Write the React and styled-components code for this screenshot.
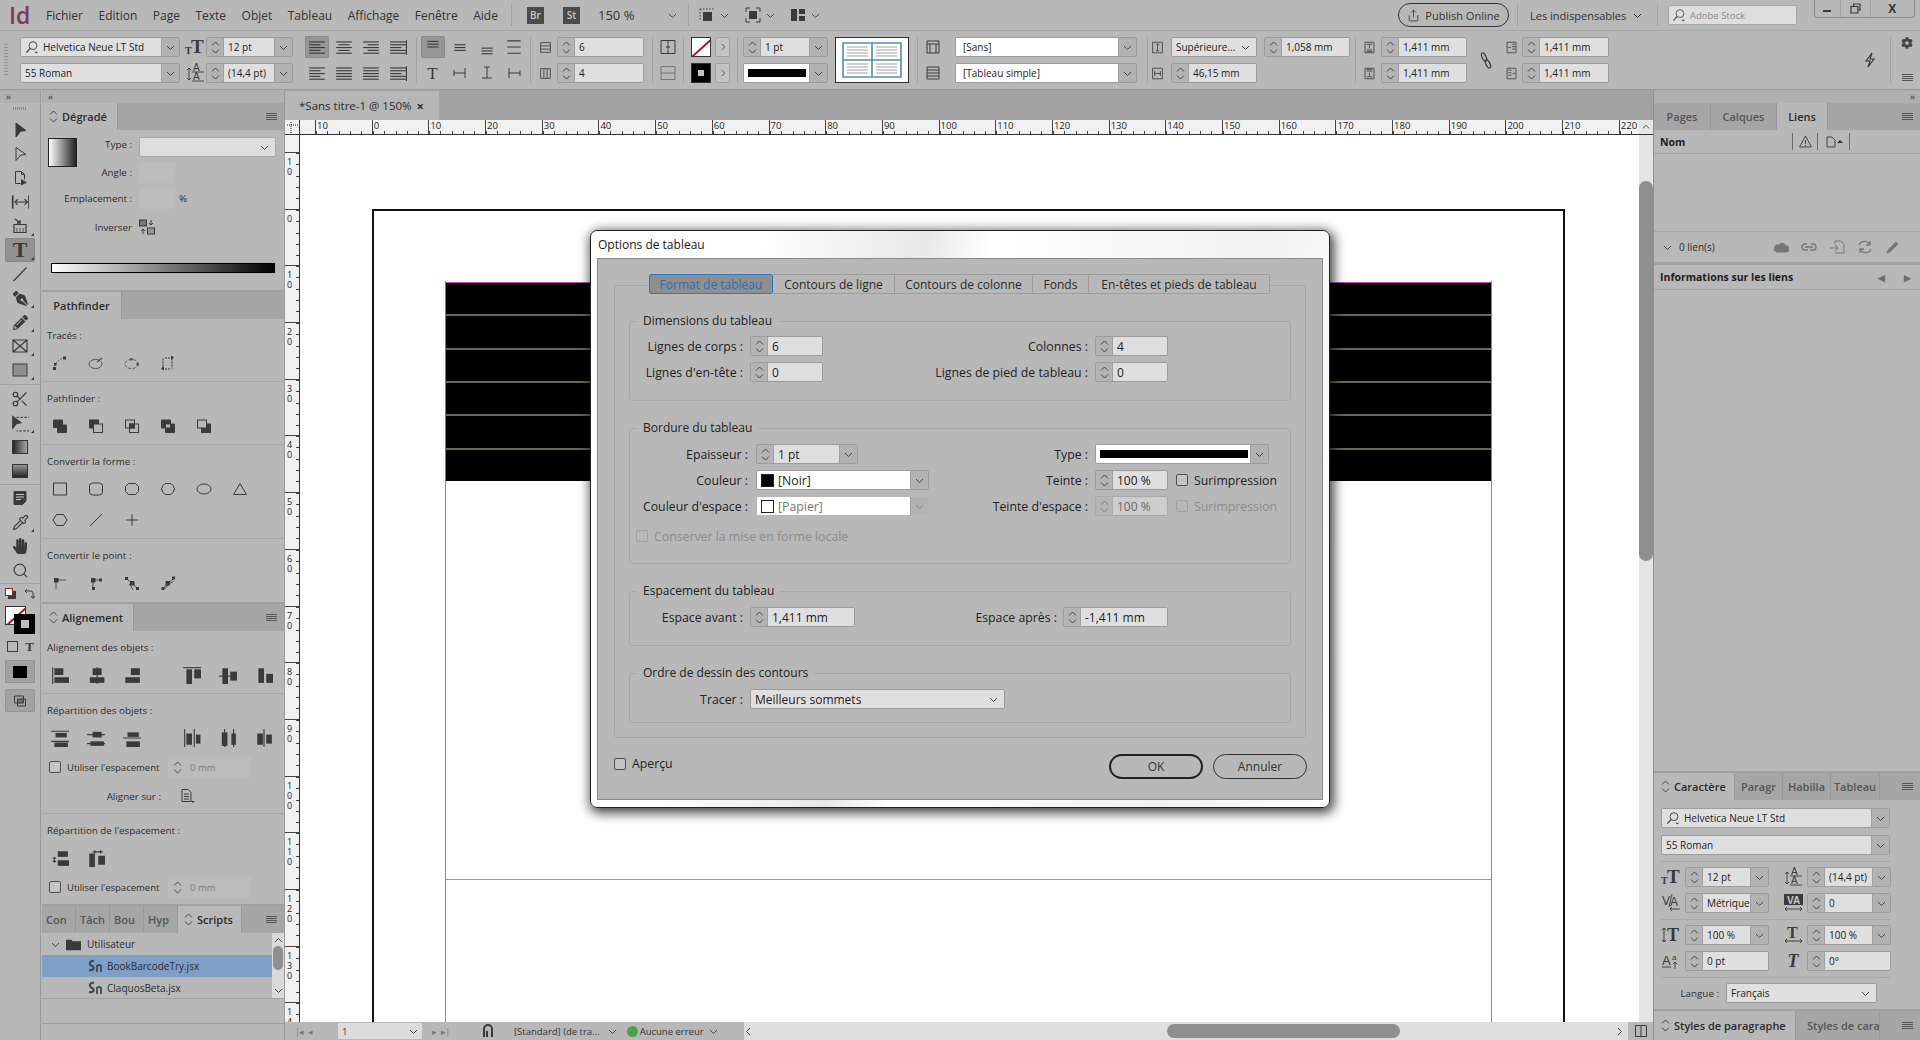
import React from "react";
import styled, { createGlobalStyle } from "styled-components";
import { Share, Scissors, Pipette, Search } from "lucide-react";
import { FaHandPaper, FaPencilAlt, FaPenNib, FaCog } from "react-icons/fa";

const GlobalStyle = createGlobalStyle`
  html, body { margin: 0; padding: 0; background: #b8b8b8; }
  body { font-family: "Open Sans", "Liberation Sans", sans-serif; color: #1e1e1e; }
  * { box-sizing: border-box; }
`;

const PANEL = "#b8b8b8";
const DARK = "#3a3a3a";

/* ---------- small drawings ---------- */

const Svg = styled.svg`
  display: block;
  flex: none;
  color: ${(p) => p.$c || DARK};
  opacity: ${(p) => p.$o || 1};
`;

const Ico = ({ s = 16, h, vb = "0 0 16 16", c, o, children }) => (
  <Svg width={s} height={h || s} viewBox={vb} $c={c} $o={o} fill="none" stroke="currentColor">
    {children}
  </Svg>
);

const Chevron = ({ s = 9, dir = "down", c = "#444" }) => {
  const d = {
    down: "M1 3 L4.5 6.5 L8 3",
    up: "M1 6 L4.5 2.5 L8 6",
    right: "M3 1 L6.5 4.5 L3 8",
    left: "M6 1 L2.5 4.5 L6 8",
  }[dir];
  return (
    <Ico s={s} vb="0 0 9 9" c={c}>
      <path d={d} strokeWidth="1" />
    </Ico>
  );
};

const SearchGlass = ({ c = "#444" }) => (
  <Ico s={15} c={c}>
    <circle cx="8.5" cy="6" r="4.2" strokeWidth="1" />
    <path d="M5.5 9 L1.5 13.5" strokeWidth="1.4" />
    <path d="M10 12.5 h4 l-2 2z" fill="currentColor" stroke="none" />
  </Ico>
);

const Burger = () => (
  <Ico s={11} vb="0 0 11 11" c="#555">
    <path d="M0 2.5h11M0 4.5h11M0 6.5h11M0 8.5h11" strokeWidth="1" />
  </Ico>
);

const Updown = () => (
  <Ico s={9} h={15} vb="0 0 9 15" c="#444">
    <path d="M1 5.5 L4.5 2 L8 5.5M1 9.5 L4.5 13 L8 9.5" strokeWidth="1" />
  </Ico>
);

const TextLines = ({ kind }) => {
  const rows = {
    left: [14, 10, 14, 10, 14],
    center: [14, 10, 14, 10, 14],
    right: [14, 10, 14, 10, 14],
    justify: [14, 14, 14, 14, 14],
    toward: [14, 14, 10, 14, 14],
  }[kind];
  return (
    <Ico s={18}>
      {rows.map((w, i) => {
        const x = kind === "center" ? 8 - w / 2 : kind === "right" ? 15 - w : 1;
        return <path key={i} d={`M${x} ${3.5 + i * 2.5}h${w}`} strokeWidth="1" />;
      })}
      {kind === "toward" && <path d="M15.5 2v13" strokeWidth="1" />}
    </Ico>
  );
};

const VAlign = ({ kind }) => {
  const ys = { top: [3, 5.5, 8], middle: [6, 8.5, 11], bottom: [9, 11.5, 14] }[kind];
  return (
    <Ico s={18}>
      {kind === "just" ? (
        <path d="M2 2.5h12M2 8h12M2 13.5h12" strokeWidth="1" />
      ) : (
        ys.map((y) => <path key={y} d={`M3 ${y}h10`} strokeWidth="1" />)
      )}
    </Ico>
  );
};

const GlyphText = styled.span`
  display: block;
  flex: none;
  font-family: "Liberation Serif", serif;
  font-weight: ${(p) => p.$w};
  font-size: ${(p) => p.$size}px;
  line-height: 1;
  color: ${DARK};
`;

const PanelText = ({ t, size = 14, w = 700 }) => (
  <GlyphText $size={size} $w={w}>
    {t}
  </GlyphText>
);

const Tx = ({ x, y, size, w = 700, fill = "currentColor", family = "Liberation Serif", children }) => (
  <text x={x} y={y} fontSize={size} fontWeight={w} fontFamily={family} fill={fill} stroke="none">
    {children}
  </text>
);

const SizeIcon = () => (
  <Ico s={20} h={18} vb="0 0 20 18">
    <Tx x={0} y={16} size={10}>T</Tx>
    <Tx x={6} y={15} size={19}>T</Tx>
  </Ico>
);

const LeadIcon = () => (
  <Ico s={19} h={20} vb="0 0 19 20">
    <Tx x={7} y={8} size={10} w={400} family="Liberation Sans">A</Tx>
    <Tx x={7} y={17} size={10} w={400} family="Liberation Sans">A</Tx>
    <path d="M6 9h12M6 18h12M3 5v12M1 7l2-2 2 2M1 15l2 2 2-2" strokeWidth=".9" />
  </Ico>
);

const KernIcon = () => (
  <Ico s={19} h={18} vb="0 0 19 18">
    <Tx x={0} y={11} size={12} w={400} family="Liberation Sans">V</Tx>
    <Tx x={8} y={12} size={12} w={400} family="Liberation Sans">A</Tx>
    <path d="M10 0L7 13M8 15h10M10 13l-2 2 2 2" strokeWidth=".9" />
  </Ico>
);

const TrackIcon = () => (
  <Ico s={19} h={18} vb="0 0 19 18">
    <rect x="0" y="0" width="19" height="11" fill="currentColor" stroke="none" />
    <Tx x={3} y={9.5} size={10} fill="#ccc" family="Liberation Sans">VA</Tx>
    <path d="M1 15h17M3 13l-2 2 2 2M16 13l2 2-2 2" strokeWidth=".9" />
  </Ico>
);

const VScaleIcon = () => (
  <Ico s={20} h={18} vb="0 0 20 18">
    <path d="M3 2v14M1 4l2-2 2 2M1 14l2 2 2-2" strokeWidth="1" />
    <Tx x={6} y={15} size={18}>T</Tx>
  </Ico>
);

const HScaleIcon = () => (
  <Ico s={19} h={18} vb="0 0 19 18">
    <Tx x={3} y={12} size={16}>T</Tx>
    <path d="M1 15h17M3 13l-2 2 2 2M16 13l2 2-2 2" strokeWidth="1" />
  </Ico>
);

const BaselineIcon = () => (
  <Ico s={18} vb="0 0 18 18">
    <Tx x={0} y={13} size={13} w={400} family="Liberation Sans">A</Tx>
    <Tx x={10} y={8} size={8} w={400} family="Liberation Sans">a</Tx>
    <path d="M0 15h9M13 10v7M11 12l2-2 2 2" strokeWidth=".9" />
  </Ico>
);

const Box = ({ x, y, w, h, f, o }) => (
  <rect x={x} y={y} width={w} height={h} fill={f ? "currentColor" : "none"} opacity={o} strokeWidth="1" stroke="none" />
);

const toolIcons = {
  select: (
    <Ico>
      <path d="M4 1 L14 8.5 L8.6 9.2 L4 15Z" fill="currentColor" />
    </Ico>
  ),
  direct: (
    <Ico>
      <path d="M4 1.5 L14 8.5 L8.6 9.2 L4 14.5Z" />
    </Ico>
  ),
  page: (
    <Ico>
      <path d="M3.5 1.5h6l3 3v5M3.5 1.5v12h5M9.5 1.5v3h3" />
      <path d="M9 9 l6 3.5 l-6 3z" fill="currentColor" stroke="none" />
    </Ico>
  ),
  gap: (
    <Ico s={18}>
      <path d="M1.5 2v12M16 2v12" strokeWidth="1.5" />
      <path d="M4 8h10M6 5.5 L3.5 8 L6 10.5M12 5.5 L14.5 8 L12 10.5" strokeWidth="1" />
    </Ico>
  ),
  collector: (
    <Ico>
      <path d="M2 6.5h12v8H2z" strokeWidth="1.2" />
      <path d="M4 11h1.5M7.2 11h1.5M10.4 11h1.5M4 13h1.5M7.2 13h1.5M10.4 13h1.5" strokeWidth="1.2" />
      <path d="M3 1 L8 5 M5 5h3V2" strokeWidth="1.3" />
    </Ico>
  ),
  line: (
    <Ico>
      <path d="M1.5 15 L14.5 1.5" strokeWidth="1.2" />
    </Ico>
  ),
  frame: (
    <Ico>
      <path d="M1 2h14v12H1zM1 2 L15 14M15 2 L1 14" strokeWidth="1.2" />
    </Ico>
  ),
  rect: (
    <Ico>
      <rect x="1" y="2" width="14" height="12" fill="#8f8f8f" stroke="#3a3a3a" />
    </Ico>
  ),
  free: (
    <Ico s={18}>
      <path d="M5 3h12v12H5" strokeDasharray="2 1.5" />
      <path d="M1 1 L10 8 L5 9 L1 14Z" fill="currentColor" stroke="none" />
    </Ico>
  ),
  gradient: (
    <Svg width="16" height="16" viewBox="0 0 16 16">
      <defs>
        <linearGradient id="tg" x1="0" x2="1">
          <stop offset="0" stopColor="#222" />
          <stop offset="1" stopColor="#aaa" />
        </linearGradient>
      </defs>
      <rect x=".5" y="1.5" width="15" height="13" fill="url(#tg)" stroke="#333" />
    </Svg>
  ),
  feather: (
    <Svg width="16" height="16" viewBox="0 0 16 16">
      <defs>
        <linearGradient id="tf" x1="0" x2="0" y1="0" y2="1">
          <stop offset="0" stopColor="#999" />
          <stop offset="1" stopColor="#222" />
        </linearGradient>
      </defs>
      <rect x=".5" y="1.5" width="15" height="13" fill="url(#tf)" stroke="#333" />
    </Svg>
  ),
  note: (
    <Ico>
      <path d="M2 1.5h12v9.5l-3.5 3.5H2z" fill="currentColor" />
      <path d="M4 4.5h8M4 7h8M4 9.5h5" stroke="#c8c8c8" strokeWidth="1" />
    </Ico>
  ),
};

const TypeGlyph = <PanelText t="T" size={22} />;

const pfIcons = {
  a: (
    <Ico>
      <path d="M2 14 Q3 6 11 3" strokeDasharray="1.5 1.5" />
      <rect x="1" y="12" width="3" height="3" fill="currentColor" stroke="none" />
      <rect x="2" y="8" width="2.5" height="2.5" fill="currentColor" stroke="none" />
      <rect x="11" y="1.5" width="3" height="3" fill="currentColor" stroke="none" />
    </Ico>
  ),
  b: (
    <Ico c="#555">
      <ellipse cx="7.5" cy="9" rx="6.5" ry="4.6" />
      <path d="M9 7 L14 3" strokeWidth="1.4" />
    </Ico>
  ),
  c: (
    <Ico c="#555">
      <ellipse cx="7.5" cy="9" rx="6.5" ry="4.6" strokeDasharray="3 1.5" />
      <rect x="6" y="3" width="2.5" height="2.5" fill="currentColor" stroke="none" />
      <rect x="12.5" y="8" width="2.5" height="2.5" fill="currentColor" stroke="none" />
    </Ico>
  ),
  d: (
    <Ico>
      <path d="M3 3.5v10M12 3.5v10M5 3h6M5 14h6" strokeDasharray="2 1" />
      <path d="M11.5 1v3l2-1.5zM3.5 15v-3l-2 1.5z" fill="currentColor" />
    </Ico>
  ),
  union: (
    <Ico>
      <path d="M1.5 2h9v5h4v7.5h-9v-5h-4z" fill="currentColor" />
    </Ico>
  ),
  minus: (
    <Ico>
      <rect x="1.5" y="2" width="9" height="8" fill="currentColor" />
      <rect x="5.5" y="6" width="9" height="8.5" fill={PANEL} />
    </Ico>
  ),
  inter: (
    <Ico>
      <rect x="1.5" y="2" width="9" height="8" />
      <rect x="5.5" y="6" width="9" height="8.5" />
      <rect x="5.5" y="6" width="5" height="4" fill="currentColor" />
    </Ico>
  ),
  excl: (
    <Ico>
      <path d="M1.5 2h9v4h-5v4h-4zM10.5 6h4v8.5h-9V10h5z" fill="currentColor" />
    </Ico>
  ),
  back: (
    <Ico>
      <rect x="5.5" y="6" width="9" height="8.5" fill="currentColor" />
      <rect x="1.5" y="2" width="9" height="8" fill={PANEL} />
    </Ico>
  ),
  srect: <Ico><rect x="1.5" y="2" width="13" height="12" /></Ico>,
  sround: <Ico><rect x="1.5" y="2" width="13" height="12" rx="3" /></Ico>,
  sbevel: <Ico><path d="M4.5 2.5h7l3 3v5l-3 3h-7l-3-3v-5z" strokeLinejoin="round" /></Ico>,
  soct: <Ico><path d="M5 2.5h6l2 2 1.5 3.5-1.5 3.5-2 2H5l-2-2L1.5 8 3 4.5z" /></Ico>,
  sell: <Ico><ellipse cx="8" cy="8" rx="7" ry="5" /></Ico>,
  stri: <Ico><path d="M8 2.5 L14.5 13.5 H1.5Z" /></Ico>,
  shex: <Ico><path d="M4.5 2.5h7l3.5 5.5-3.5 5.5h-7L1 8z" /></Ico>,
  sline: <Ico><path d="M2 14 L14 2" /></Ico>,
  splus: <Ico><path d="M8 2v12M2 8h12" /></Ico>,
  p1: (
    <Ico>
      <rect x="2" y="3" width="4.5" height="4.5" fill="currentColor" stroke="none" />
      <path d="M6 5h8M4 7v7" strokeWidth=".8" />
    </Ico>
  ),
  p2: (
    <Ico>
      <rect x="3" y="3" width="4.5" height="4.5" fill="currentColor" stroke="none" />
      <rect x="4" y="12" width="3" height="3" fill="currentColor" stroke="none" />
      <rect x="11" y="3.5" width="3" height="3" fill="currentColor" stroke="none" />
      <path d="M5 7v6M7 5h5" strokeWidth=".8" />
    </Ico>
  ),
  p3: (
    <Ico>
      <rect x="6" y="6" width="4.5" height="4.5" fill="currentColor" stroke="none" />
      <rect x="1" y="2" width="3" height="3" fill="currentColor" stroke="none" />
      <rect x="12" y="12" width="3" height="3" fill="currentColor" stroke="none" />
      <path d="M2 3 L14 14 M5 9 Q8 12 9 15" strokeWidth=".8" />
    </Ico>
  ),
  p4: (
    <Ico>
      <rect x="5.5" y="6" width="4.5" height="4.5" fill="currentColor" stroke="none" />
      <rect x="1.5" y="12" width="3" height="3" fill="currentColor" stroke="none" />
      <rect x="12" y="1.5" width="3" height="3" fill="currentColor" stroke="none" />
      <path d="M2 14 L14 3 M5 14 Q7 9 14 6" strokeWidth=".8" />
    </Ico>
  ),
};

const alignIcons = {
  l: <Ico s={18}><path d="M1.5 1v16" /><Box x={3} y={2} w={8} h={6} f /><Box x={3} y={10} w={13} h={5} f /></Ico>,
  c: <Ico s={18}><path d="M9 1v16" /><Box x={5} y={2} w={8} h={6} f /><Box x={2.5} y={10} w={13} h={5} f /></Ico>,
  r: <Ico s={18}><path d="M16.5 1v16" /><Box x={7} y={2} w={8} h={6} f /><Box x={2} y={10} w={13} h={5} f /></Ico>,
  t: <Ico s={18}><path d="M0 1.5h18" /><Box x={3} y={3} w={5} h={13} f /><Box x={10} y={3} w={6} h={8} f /></Ico>,
  m: <Ico s={18}><path d="M0 9h18" /><Box x={3} y={2} w={5} h={14} f /><Box x={10} y={5} w={6} h={8} f /></Ico>,
  b: <Ico s={18}><path d="M0 16.5h18" /><Box x={3} y={2} w={5} h={13} f /><Box x={10} y={7} w={6} h={8} f /></Ico>,
  dt: <Ico s={18}><path d="M0 2h18M0 11h18" /><Box x={4} y={3.5} w={10} h={4} f /><Box x={3} y={12} w={12} h={4} f /></Ico>,
  dm: <Ico s={18}><path d="M0 5h18M0 13h18" /><Box x={5} y={2.5} w={8} h={5} f /><Box x={3} y={11} w={12} h={4} f /></Ico>,
  db: <Ico s={18}><path d="M0 8h18M0 16.5h18" /><Box x={4} y={3} w={10} h={4} f /><Box x={3} y={11} w={12} h={5} f /></Ico>,
  dl: <Ico s={18}><path d="M1.5 0v18M10 0v18" /><Box x={3} y={4} w={5} h={10} f /><Box x={11.5} y={5} w={4} h={8} f /></Ico>,
  dh: <Ico s={18}><path d="M5 0v18M13 0v18" /><Box x={2.5} y={3} w={5} h={12} f /><Box x={11} y={4} w={4} h={10} f /></Ico>,
  dr: <Ico s={18}><path d="M8 0v18M16.5 0v18" /><Box x={2} y={4} w={5} h={10} f /><Box x={10} y={5} w={5} h={8} f /></Ico>,
  sv: <Ico s={18}><path d="M3 7v5M1.5 8h3M1.5 11h3" /><Box x={6} y={2} w={9} h={5} f /><Box x={6} y={10} w={11} h={5} f /></Ico>,
  sh: <Ico s={18}><path d="M5 2.5h9M7 1v3M12 1v3" /><Box x={2} y={4} w={5} h={13} f /><Box x={10} y={6} w={6} h={8} f /></Ico>,
};

/* ---------- shared controls ---------- */

const SpinBox = styled.div`
  display: flex;
  flex: none;
  width: ${(p) => p.$w}px;
  height: 20px;
  border: 1px solid #9c9c9c;
  border-radius: 2px;
  overflow: hidden;
  font-size: ${(p) => p.$fs || 10}px;
  opacity: ${(p) => (p.$off ? 0.55 : 1)};
`;

const Stepper = styled.div`
  display: flex;
  flex: none;
  width: 17px;
  align-items: center;
  justify-content: center;
  background: #b4b4b4;
  border-right: 1px solid #a0a0a0;
`;

const SpinValue = styled.div`
  flex: 1;
  min-width: 0;
  display: flex;
  align-items: center;
  padding-left: ${(p) => p.$pad || 4}px;
  white-space: nowrap;
  color: #222;
  background: ${(p) => (p.$white ? "#fff" : "#dfdfdf")};
`;

const DropPart = styled.div`
  display: flex;
  flex: none;
  width: 18px;
  align-items: center;
  justify-content: center;
  background: #b2b2b2;
  border-left: 1px solid #a0a0a0;
`;

const ValueText = styled.span`
  margin-left: ${(p) => (p.$g ? 3 : 0)}px;
`;

const Tail = styled.span`
  margin-left: auto;
  padding-right: 6px;
`;

const Spin = ({ w, value, drop, fs, off, noStep }) => (
  <SpinBox $w={w} $fs={fs} $off={off}>
    {!noStep && (
      <Stepper>
        <Updown />
      </Stepper>
    )}
    <SpinValue>{value}</SpinValue>
    {drop && (
      <DropPart>
        <Chevron />
      </DropPart>
    )}
  </SpinBox>
);

const FieldSelect = ({ w, value, white, fs, search, off, inlineChevron, pad }) => (
  <SpinBox $w={w} $fs={fs} $off={off}>
    <SpinValue $white={white} $pad={pad}>
      {search && <SearchGlass />}
      <ValueText $g={search}>{value}</ValueText>
      {inlineChevron && (
        <Tail>
          <Chevron />
        </Tail>
      )}
    </SpinValue>
    {!inlineChevron && (
      <DropPart>
        <Chevron />
      </DropPart>
    )}
  </SpinBox>
);

/* ---------- menu bar ---------- */

const Page = styled.div`
  position: relative;
  width: 1920px;
  height: 1040px;
  overflow: hidden;
  display: flex;
  flex-direction: column;
  background: ${PANEL};
`;

const MenuBar = styled.div`
  display: flex;
  align-items: center;
  height: 30px;
  flex: none;
`;

const Logo = styled.div`
  width: 46px;
  padding-left: 9px;
  font-size: 23px;
  font-weight: 600;
  line-height: 1;
  color: #7d3c55;
`;

const MenuList = styled.div`
  display: flex;
  justify-content: space-between;
  width: 452px;
  font-size: 12px;
  color: #333;
`;

const BarSep = styled.div`
  width: 1px;
  height: ${(p) => p.$h || 22}px;
  margin-left: ${(p) => p.$ml || 0}px;
  background: #a2a2a2;
  flex: none;
`;

const Badge = styled.div`
  display: flex;
  flex: none;
  align-items: center;
  justify-content: center;
  width: 17px;
  height: 17px;
  margin-left: ${(p) => p.$ml}px;
  background: #4a4a4a;
  color: #c8c8c8;
  font-size: 10px;
  font-weight: 600;
`;

const Zoom = styled.div`
  width: 70px;
  margin-left: 18px;
  font-size: 13px;
  color: #333;
`;

const BarIcon = styled.div`
  display: flex;
  flex: none;
  align-items: center;
  gap: 5px;
  margin-left: ${(p) => p.$ml || 0}px;
`;

const Publish = styled.div`
  display: flex;
  align-items: center;
  justify-content: center;
  gap: 5px;
  width: 111px;
  height: 24px;
  margin-left: auto;
  border: 1px solid #333;
  border-radius: 12px;
  font-size: 11px;
  color: #333;
  white-space: nowrap;
`;

const Workspace = styled.div`
  display: flex;
  align-items: center;
  gap: 7px;
  width: 139px;
  padding-left: 12px;
  font-size: 11px;
  color: #333;
  white-space: nowrap;
`;

const StockField = styled.div`
  display: flex;
  align-items: center;
  gap: 3px;
  width: 129px;
  height: 20px;
  margin-left: 10px;
  padding-left: 3px;
  background: #dedede;
  border: 1px solid #a8a8a8;
  border-radius: 2px;
  font-size: 9.5px;
  color: #8a8a8a;
`;

const WinButtons = styled.div`
  display: flex;
  align-self: flex-start;
  width: 101px;
  height: 18px;
  margin: 0 5px 0 17px;
  border: 1px solid #8c8c8c;
  border-top: 0;
  border-radius: 0 0 3px 3px;
`;

const WinBtn = styled.div`
  flex: ${(p) => p.$f || 1};
  display: flex;
  align-items: center;
  justify-content: center;
  font-size: 12px;
  font-weight: 700;
  color: #333;
  border-left: ${(p) => (p.$first ? 0 : "1px solid #a0a0a0")};
`;

/* ---------- options bar ---------- */

const OptionsBar = styled.div`
  display: flex;
  align-items: center;
  flex: none;
  height: 60px;
  border-top: 1px solid #a6a6a6;
  border-bottom: 1px solid #989898;
`;

const Grip = styled.div`
  width: 20px;
  height: 32px;
  flex: none;
  background: repeating-linear-gradient(180deg, #8f8f8f 0 1px, transparent 1px 3px) 4px 0 / 4px 100% no-repeat;
`;

const Pair = styled.div`
  display: flex;
  flex: none;
  flex-direction: column;
  gap: 6px;
  width: ${(p) => p.$w}px;
  margin-left: ${(p) => p.$ml || 0}px;
`;

const Line = styled.div`
  display: flex;
  align-items: center;
  height: 20px;
  justify-content: ${(p) => (p.$end ? "flex-end" : "flex-start")};
  gap: ${(p) => p.$gap || 0}px;
`;

const FourBtns = styled.div`
  display: grid;
  flex: none;
  grid-template-columns: repeat(4, 27px);
  grid-auto-rows: 26px;
  margin-left: ${(p) => p.$ml || 0}px;
  place-items: center;
`;

const AlignBtn = styled.div`
  display: flex;
  width: 24px;
  height: 22px;
  align-items: center;
  justify-content: center;
  border-radius: 2px;
  background: ${(p) => (p.$on ? "#969696" : "transparent")};
  box-shadow: ${(p) => (p.$on ? "inset 0 0 0 1px #8a8a8a" : "none")};
`;

const Swatch = styled.div`
  position: relative;
  width: 20px;
  height: 20px;
  flex: none;
  background: ${(p) => (p.$black ? "#000" : "#fff")};
  border: 1px solid #333;
  overflow: hidden;
`;

const SwatchCore = styled.div`
  width: 6px;
  height: 6px;
  margin: 6px;
  background: #c4c4c4;
`;

const SmallBtn = styled.div`
  display: flex;
  width: 15px;
  height: 20px;
  flex: none;
  align-items: center;
  justify-content: center;
  background: #c4c4c4;
  border: 1px solid #a0a0a0;
  border-radius: 2px;
`;

const StrokeBar = styled.div`
  flex: 1;
  margin-right: 3px;
  height: 8px;
  background: #000;
`;

const Preview = styled.div`
  display: flex;
  flex: none;
  align-items: center;
  justify-content: center;
  width: 74px;
  height: 46px;
  margin-left: 7px;
  background: #fff;
  border: 1px solid #333;
`;

const OptIcon = styled.div`
  display: flex;
  flex: none;
  width: ${(p) => p.$w || 18}px;
  justify-content: center;
  align-items: center;
`;

const BarEnd = styled.div`
  display: flex;
  align-items: center;
  margin-left: auto;
  margin-right: 7px;
`;

const SideIcons = styled.div`
  display: flex;
  flex-direction: column;
  justify-content: space-between;
  align-items: center;
  height: 46px;
  margin-left: 10px;
`;

/* ---------- main area ---------- */

const Main = styled.div`
  display: flex;
  flex: 1;
  min-height: 0;
`;

const CollapseStrip = styled.div`
  height: 13px;
  flex: none;
  display: flex;
  align-items: center;
  justify-content: ${(p) => p.$j || "flex-start"};
  padding: 0 6px;
  background: #b0b0b0;
  color: #555;
  font-size: 8px;
  font-weight: 700;
  letter-spacing: -1px;
`;

const ToolDock = styled.div`
  width: 41px;
  flex: none;
  display: flex;
  flex-direction: column;
  border-right: 1px solid #9a9a9a;
`;

const ToolGrip = styled.div`
  height: 15px;
  flex: none;
  background: repeating-linear-gradient(90deg, #8a8a8a 0 1px, transparent 1px 2px) center 4px / 14px 3px no-repeat;
`;

const ToolBtn = styled.div`
  position: relative;
  display: flex;
  align-items: center;
  justify-content: center;
  height: 24px;
  margin: 0 5px;
  border-radius: 2px;
  background: ${(p) => (p.$on ? "#929292" : "transparent")};
  box-shadow: ${(p) => (p.$on ? "inset 0 0 0 1px #868686" : "none")};

  &::after {
    content: "";
    display: ${(p) => (p.$more ? "block" : "none")};
    position: absolute;
    right: 1px;
    bottom: 2px;
    border-left: 3px solid transparent;
    border-bottom: 3px solid #333;
  }
`;

const ToolDivider = styled.div`
  height: 1px;
  margin: ${(p) => (p.$tight ? "1px 0" : "2px 0")};
  background: #a0a0a0;
`;

const ColourBlock = styled.div`
  position: relative;
  height: 49px;
  flex: none;
`;

const SwapRow = styled.div`
  display: flex;
  justify-content: space-between;
  padding: 3px 5px 0;
`;

const FillBox = styled.div`
  position: absolute;
  left: 5px;
  top: 21px;
  width: 21px;
  height: 19px;
  background: #fff;
  border: 1px solid #333;
  overflow: hidden;
`;

const StrokeBox = styled.div`
  position: absolute;
  left: 14px;
  top: 29px;
  width: 21px;
  height: 20px;
  display: flex;
  align-items: center;
  justify-content: center;
  background: #000;
`;

const StrokeHole = styled.div`
  width: 8px;
  height: 8px;
  background: #bdbdbd;
`;

const RedSlash = styled.div`
  position: absolute;
  left: -6px;
  top: 8px;
  width: 34px;
  height: 2px;
  background: #a81e1e;
  transform: rotate(-42deg);
`;

const FormatRow = styled.div`
  display: flex;
  align-items: center;
  justify-content: space-between;
  height: 15px;
  margin: 5px 6px 0;
`;

const DockBtn = styled.div`
  position: relative;
  display: flex;
  align-items: center;
  justify-content: center;
  width: 30px;
  height: 23px;
  margin: ${(p) => p.$mt}px 5px 0;
  border-radius: 2px;
  background: #a2a2a2;
  box-shadow: inset 0 0 0 1px #959595;
`;

const BlackSwatch = styled.div`
  width: 14px;
  height: 12px;
  background: #000;
`;

const LeftColumn = styled.div`
  width: 243px;
  flex: none;
  margin-left: 1px;
  display: flex;
  flex-direction: column;
  border-right: 1px solid #9a9a9a;
`;

const TabRow = styled.div`
  display: flex;
  flex: none;
  align-items: stretch;
  height: ${(p) => p.$h || 27}px;
  background: #a6a6a6;
`;

const PanelTab = styled.div`
  display: flex;
  flex: none;
  align-items: center;
  justify-content: ${(p) => (p.$center ? "center" : "flex-start")};
  gap: 4px;
  width: ${(p) => p.$w}px;
  padding-left: ${(p) => (p.$center ? 0 : p.$pl ?? 7)}px;
  overflow: hidden;
  white-space: nowrap;
  font-size: 11px;
  font-weight: 600;
  color: ${(p) => (p.$on ? "#2c2c2c" : "#555")};
  background: ${(p) => (p.$on ? PANEL : "#a6a6a6")};
  border-right: 1px solid #989898;
`;

const MenuEnd = styled.div`
  display: flex;
  align-items: center;
  margin-left: auto;
  padding-right: 7px;
`;

const PanelSep = styled.div`
  height: ${(p) => p.$h || 2}px;
  flex: none;
  background: #a0a0a0;
`;

const DegBody = styled.div`
  height: 160px;
  flex: none;
  padding-top: 7px;
  display: flex;
  flex-direction: column;
`;

const DegRow = styled.div`
  display: grid;
  grid-template-columns: 90px 1fr;
  align-items: center;
  column-gap: 7px;
  height: ${(p) => p.$h}px;
  margin-bottom: ${(p) => p.$mb || 0}px;
  font-size: 9.8px;
  color: #2c2c2c;
`;

const DegLabel = styled.div`
  display: flex;
  justify-content: flex-end;
  align-items: flex-start;
  white-space: nowrap;
`;

const GradThumb = styled.div`
  width: 29px;
  height: 29px;
  margin: 0 auto -10px 6px;
  background: linear-gradient(90deg, #fff, #222);
  border: 1px solid #222;
  align-self: flex-start;
`;

const GhostField = styled.div`
  width: 36px;
  height: 21px;
  background: #bcbcbc;
`;

const InlineRow = styled.div`
  display: flex;
  align-items: center;
  gap: 4px;
`;

const GradBar = styled.div`
  height: 10px;
  margin: 24px 9px 0;
  background: linear-gradient(90deg, #fff, #000);
  border: 1px solid #000;
`;

const SelectLight = styled.div`
  display: flex;
  align-items: center;
  justify-content: flex-end;
  width: 137px;
  height: 20px;
  padding-right: 6px;
  background: #dedede;
  border: 1px solid #a8a8a8;
  border-radius: 2px;
`;

const ToolBlock = styled.div`
  flex: none;
  padding: ${(p) => p.$pt ?? 8}px 5px ${(p) => p.$pb ?? 6}px;
  border-bottom: ${(p) => (p.$last ? 0 : "1px solid #a6a6a6")};
`;

const Caption = styled.div`
  height: 16px;
  display: flex;
  align-items: center;
  font-size: 9.8px;
  color: #2c2c2c;
`;

const IconGrid = styled.div`
  display: grid;
  grid-template-columns: ${(p) => (p.$split ? "repeat(3, 36px) 24px repeat(3, 36px)" : "repeat(6, 36px)")};
  grid-auto-rows: 24px;
  row-gap: 7px;
  margin: 8px 0 0 -5px;
  place-items: center;
`;

const SplitGap = styled.span`
  width: 24px;
`;

const CheckRow = styled.div`
  display: flex;
  align-items: center;
  height: 22px;
  margin-top: ${(p) => p.$mt || 6}px;
  padding-left: 2px;
  font-size: 9.5px;
  color: #2c2c2c;
`;

const CheckBox = styled.div`
  width: ${(p) => p.$s || 12}px;
  height: ${(p) => p.$s || 12}px;
  flex: none;
  border: 1px solid ${(p) => (p.$off ? "#a0a0a0" : "#4e4e4e")};
  border-radius: 2px;
  background: ${(p) => (p.$off ? "transparent" : "#c4c4c4")};
`;

const CheckLabel = styled.span`
  margin-left: 6px;
  width: 101px;
  white-space: nowrap;
`;

const GhostSpin = styled.div`
  display: flex;
  align-items: center;
  gap: 8px;
  width: 83px;
  height: 21px;
  padding-left: 5px;
  background: #bcbcbc;
  color: #777;
  font-size: 9.5px;
`;

const AlignOn = styled.div`
  display: flex;
  align-items: center;
  justify-content: flex-end;
  gap: 18px;
  height: 22px;
  margin-top: 7px;
  width: 148px;
  font-size: 9.8px;
  color: #2c2c2c;
`;

const ScriptList = styled.div`
  display: flex;
  height: 66px;
  flex: none;
  border-bottom: 1px solid #a2a2a2;
`;

const ScriptRows = styled.div`
  flex: 1;
  font-size: 10px;
  color: #2c2c2c;
`;

const ScriptRow = styled.div`
  display: flex;
  align-items: center;
  gap: ${(p) => (p.$folder ? 6 : 5)}px;
  height: 22px;
  padding-left: ${(p) => p.$pl}px;
  background: ${(p) => (p.$sel ? "#7f9fc7" : "transparent")};
`;

const ListScroll = styled.div`
  display: flex;
  flex-direction: column;
  align-items: center;
  justify-content: space-between;
  width: 12px;
  padding: 3px 0;
  background: #dadada;
`;

const ListThumb = styled.div`
  width: 10px;
  height: 24px;
  margin-top: -16px;
  border-radius: 5px;
  background: #8f8f8f;
`;

const BlankFoot = styled.div`
  height: 25px;
  flex: none;
  border-bottom: 1px solid #9c9c9c;
`;

/* ---------- document window ---------- */

const DocColumn = styled.div`
  flex: 1;
  min-width: 0;
  display: flex;
  flex-direction: column;
  border-right: 1px solid #8e8e8e;
`;

const DocTabs = styled.div`
  height: 30px;
  flex: none;
  display: flex;
  align-items: flex-end;
  background: #a2a2a2;
`;

const DocTab = styled.div`
  display: flex;
  align-items: center;
  justify-content: space-between;
  width: 154px;
  height: 29px;
  padding: 0 15px 0 14px;
  background: #b6b6b6;
  font-size: 11.5px;
  font-weight: 500;
  color: #2c2c2c;
`;

const TabClose = styled.span`
  font-size: 13px;
  font-weight: 700;
`;

const RulerTop = styled.div`
  display: flex;
  height: 15px;
  flex: none;
  background: #f1f1f1;
  border-bottom: 1px solid #333;
  overflow: hidden;
`;

const RulerCorner = styled.div`
  display: flex;
  width: 15px;
  flex: none;
  align-items: center;
  justify-content: center;
  border-right: 1px solid #333;
`;

const HTicks = styled.div`
  display: flex;
  flex: 1;
  min-width: 0;
  padding-left: 15px;
  overflow: hidden;
`;

const HCell = styled.div`
  flex: none;
  width: 56.7px;
  height: 14px;
  padding-left: 1px;
  border-left: 1px solid #444;
  font-size: 9.5px;
  line-height: 11px;
  color: #222;
  background: repeating-linear-gradient(90deg, #444 0 1px, transparent 1px 11.34px) 0 100% / 100% 3px no-repeat;
`;

const ScrollEnd = styled.div`
  display: flex;
  align-items: center;
  justify-content: center;
  width: 14px;
  flex: none;
  background: #e6e6e6;
`;

const CanvasRow = styled.div`
  display: flex;
  flex: 1;
  min-height: 0;
`;

const RulerLeft = styled.div`
  width: 15px;
  flex: none;
  padding-top: 17px;
  background: #f1f1f1;
  border-right: 1px solid #333;
  overflow: hidden;
`;

const VCell = styled.div`
  height: 56.7px;
  padding: 4px 0 0 2px;
  border-top: 1px solid #444;
  font-size: 9px;
  line-height: 10px;
  color: #222;
  background: repeating-linear-gradient(180deg, #444 0 1px, transparent 1px 11.34px) 100% 0 / 3px 100% no-repeat;
`;

const Canvas = styled.div`
  position: relative;
  flex: 1;
  min-width: 0;
  background: #fff;
  overflow: hidden;
`;

const DocPage = styled.div`
  position: absolute;
  left: 72px;
  top: 74px;
  width: 1193px;
  height: 900px;
  border: 2px solid #111;
`;

const MarginGuides = styled.div`
  position: absolute;
  left: 145px;
  top: 146px;
  width: 1047px;
  height: 800px;
  border-left: 1px solid #a07ac0;
  border-right: 1px solid #a07ac0;
`;

const BlueRule = styled.div`
  position: absolute;
  left: 0;
  right: 0;
  top: 598px;
  height: 1px;
  background: #7f9dc8;
`;

const BlackTable = styled.div`
  position: absolute;
  left: 145px;
  top: 147px;
  width: 1047px;
  height: 199px;
  display: flex;
  flex-direction: column;
  background: #000;
  border-top: 1px solid #b84fb8;
  border-left: 1px solid #b84fb8;
  border-right: 1px solid #6f9a5a;
`;

const TableRow = styled.div`
  flex: 1;
  border-bottom: ${(p) => (p.$last ? 0 : "2px solid #6e6654")};
`;

const VScroll = styled.div`
  display: flex;
  flex-direction: column;
  align-items: center;
  width: 14px;
  flex: none;
  padding-top: 46px;
  background: #e4e4e4;
`;

const VThumb = styled.div`
  width: 14px;
  height: 380px;
  border-radius: 7px;
  background: #8f8f8f;
`;

const StatusBar = styled.div`
  display: flex;
  align-items: center;
  height: 18px;
  flex: none;
  font-size: 9.5px;
  color: #333;
`;

const StatusLeft = styled.div`
  display: flex;
  align-items: center;
  width: 459px;
  height: 100%;
  flex: none;
  padding-left: 10px;
  gap: 10px;
`;

const NavGlyph = styled.span`
  display: flex;
  color: #777;
  font-size: 9px;
  letter-spacing: -1px;
  width: ${(p) => p.$w || 12}px;
  white-space: pre;
`;

const PageField = styled.div`
  display: flex;
  align-items: center;
  justify-content: space-between;
  width: 84px;
  height: 16px;
  flex: none;
  padding: 0 4px;
  background: #dcdcdc;
`;

const Green = styled.div`
  width: 11px;
  height: 11px;
  flex: none;
  border-radius: 50%;
  background: #47a44a;
`;

const StatusText = styled.span`
  display: flex;
  align-items: center;
  gap: ${(p) => p.$gap || 8}px;
  white-space: nowrap;
  margin-left: ${(p) => p.$ml || 0}px;
`;

const HTrack = styled.div`
  display: flex;
  align-items: center;
  flex: 1;
  height: 100%;
  padding: 0 4px 0 0;
  background: #dedede;
`;

const HThumb = styled.div`
  width: 233px;
  height: 14px;
  margin: 0 auto 0 414px;
  border-radius: 7px;
  background: #8f8f8f;
`;

const StatusEnd = styled.div`
  display: flex;
  align-items: center;
  justify-content: center;
  width: 25px;
  flex: none;
`;

/* ---------- right panels ---------- */

const RightColumn = styled.div`
  width: 266px;
  flex: none;
  display: flex;
  flex-direction: column;
`;

const NameHead = styled.div`
  display: flex;
  align-items: center;
  height: 24px;
  flex: none;
  padding-left: 6px;
  border-bottom: 1px solid #a6a6a6;
  font-size: 10.5px;
  font-weight: 700;
  color: #1e1e1e;
`;

const HeadCell = styled.div`
  display: flex;
  align-items: center;
  justify-content: center;
  height: 17px;
  width: ${(p) => p.$w}px;
  margin-left: ${(p) => p.$ml || 0}px;
  border-left: 1px solid #6c6c6c;
  border-right: ${(p) => (p.$r ? "1px solid #6c6c6c" : 0)};
`;

const LinkList = styled.div`
  height: 78px;
  flex: none;
  border-bottom: 1px solid #a6a6a6;
`;

const LinkFoot = styled.div`
  display: flex;
  align-items: center;
  height: 30px;
  flex: none;
  padding-left: 9px;
  font-size: 10px;
  color: #2c2c2c;
`;

const FootCount = styled.span`
  margin-left: 7px;
  width: 88px;
`;

const FootIcons = styled.div`
  display: grid;
  grid-template-columns: repeat(5, 28px);
  place-items: center;
`;

const InfoHead = styled.div`
  display: flex;
  align-items: center;
  height: 25px;
  flex: none;
  padding: 0 9px 0 6px;
  border-bottom: 1px solid #a6a6a6;
  font-size: 10.5px;
  font-weight: 700;
  color: #1e1e1e;
`;

const InfoArrows = styled.div`
  display: flex;
  gap: 19px;
  margin-left: auto;
  color: #6e6e6e;
  font-size: 9px;
`;

const Grow = styled.div`
  flex: 1;
  min-height: 0;
`;

const CharBody = styled.div`
  height: 209px;
  flex: none;
  padding: 8px 0 0 7px;
`;

const CharStack = styled.div`
  display: flex;
  flex-direction: column;
  gap: ${(p) => p.$gap || 6}px;
  width: 229px;
`;

const CharDivider = styled.div`
  width: 229px;
  height: 1px;
  margin: 6px 0 5px;
  background: #a6a6a6;
`;

const CharRow = styled.div`
  display: flex;
  gap: 14px;
`;

const CharCell = styled.div`
  display: flex;
  align-items: center;
  gap: 4px;
  width: ${(p) => p.$w}px;
`;

const LangRow = styled.div`
  display: flex;
  align-items: center;
  gap: 7px;
  font-size: 9.8px;
  color: #2c2c2c;
`;

const LangLabel = styled.div`
  width: 58px;
  text-align: right;
  white-space: nowrap;
`;

/* ---------- dialog ---------- */

const Dialog = styled.div`
  position: absolute;
  left: 590px;
  top: 230px;
  width: 740px;
  height: 578px;
  display: flex;
  flex-direction: column;
  padding: 0 6px 7px;
  border: 1px solid #222;
  border-radius: 7px;
  background: linear-gradient(100deg, #fff 0 20%, #e8e8e8 40%, #fff 48%, #f2f2f2 80%, #fff);
  box-shadow: 2px 3px 12px 2px rgba(0, 0, 0, 0.75);
`;

const DialogTitle = styled.div`
  height: 27px;
  flex: none;
  display: flex;
  align-items: center;
  padding-left: 1px;
  font-size: 12px;
  color: #1a1a1a;
`;

const DialogBody = styled.div`
  flex: 1;
  min-height: 0;
  background: ${PANEL};
  border: 1px solid #888;
  font-size: 12.3px;
  color: #222;
`;

const TabFrame = styled.div`
  position: relative;
  height: 453px;
  margin: 26px 16px 0;
  padding: 35px 14px 0;
  display: flex;
  flex-direction: column;
  gap: 27px;
  border: 1px solid #a8a8a8;
  border-radius: 3px;
`;

const DlgTabs = styled.div`
  position: absolute;
  top: -12px;
  left: 34px;
  display: flex;
  background: ${PANEL};
`;

const DlgTab = styled.div`
  display: flex;
  align-items: center;
  justify-content: center;
  width: ${(p) => p.$w}px;
  height: 20px;
  font-size: 12px;
  color: ${(p) => (p.$on ? "#2f6cab" : "#2a2a2a")};
  background: ${(p) => (p.$on ? "#8f8f8f" : PANEL)};
  border: 1px solid ${(p) => (p.$on ? "#2f78c8" : "#9c9c9c")};
  border-left-width: ${(p) => (p.$on || p.$first ? 1 : 0)}px;
  border-radius: ${(p) => (p.$on ? "2px" : "0")};
`;

const Group = styled.div`
  position: relative;
  height: ${(p) => p.$h}px;
  flex: none;
  padding-top: ${(p) => p.$pt || 15}px;
  display: flex;
  flex-direction: column;
  gap: 6px;
  border: 1px solid #a8a8a8;
  border-radius: 3px;
`;

const Legend = styled.div`
  position: absolute;
  top: -10px;
  left: 7px;
  padding: 0 6px;
  background: ${PANEL};
  font-size: 12px;
  line-height: 18px;
`;

const FieldRow = styled.div`
  display: flex;
  align-items: center;
  height: 20px;
  margin-top: ${(p) => p.$mt || 0}px;
  padding-left: ${(p) => p.$pl || 0}px;
`;

const Left = styled.div`
  display: flex;
  align-items: center;
  width: ${(p) => p.$w || 346}px;
  flex: none;
`;

const Right = styled.div`
  display: flex;
  align-items: center;
`;

const FieldLabel = styled.div`
  display: flex;
  justify-content: flex-end;
  flex: none;
  width: ${(p) => p.$w}px;
  margin-right: ${(p) => p.$mr ?? 7}px;
  white-space: nowrap;
`;

const Ink = styled.div`
  width: 13px;
  height: 13px;
  flex: none;
  margin-right: 4px;
  background: ${(p) => (p.$paper ? "#fff" : "#000")};
  border: 1px solid #222;
`;

const ColourField = styled.div`
  display: flex;
  flex: none;
  width: 173px;
  height: 20px;
  border: 1px solid ${(p) => (p.$off ? PANEL : "#9c9c9c")};
  border-radius: 2px;
  overflow: hidden;
  color: ${(p) => (p.$off ? "#777" : "#222")};
`;

const WhiteCell = styled.div`
  flex: 1;
  display: flex;
  align-items: center;
  padding-left: 4px;
  background: #fff;
`;

const TypeStroke = styled.div`
  width: 148px;
  height: 8px;
  background: #000;
`;

const CheckRight = styled.div`
  display: flex;
  align-items: center;
  margin-left: ${(p) => p.$ml ?? 8}px;
  color: ${(p) => (p.$off ? "#8a8a8a" : "#222")};
`;

const CheckText = styled.span`
  margin-left: 6px;
  white-space: nowrap;
`;

const FooterRow = styled.div`
  display: flex;
  align-items: center;
  margin-top: 16px;
  padding: 0 15px 0 16px;
`;

const Preview2 = styled.div`
  display: flex;
  align-items: center;
  margin: -6px auto 0 0;
`;

const PillBtn = styled.div`
  display: flex;
  align-items: center;
  justify-content: center;
  width: 94px;
  height: 25px;
  margin-left: 10px;
  border: ${(p) => (p.$primary ? "2px solid #222" : "1px solid #333")};
  border-radius: 13px;
  font-size: 12px;
  color: #333;
`;

const GlyphItalic = styled.span`
  font-family: "Liberation Serif", serif;
  font-weight: 700;
  font-style: italic;
  font-size: 18px;
  line-height: 1;
  color: ${DARK};
`;

const hLabels = [10, 0, 10, 20, 30, 40, 50, 60, 70, 80, 90, 100, 110, 120, 130, 140, 150, 160, 170, 180, 190, 200, 210, 220];
const vLabels = ["10", "0", "10", "20", "30", "40", "50", "60", "70", "80", "90", "100", "110", "120", "130", "14"];

const ScriptGlyph = () => (
  <Ico s={14} vb="0 0 14 14" c="#3f4a55">
    <path d="M6 2 C1 1 1 6 4 7 C7 8 6 12 1 11" strokeWidth="2.2" />
    <path d="M9 6v7M13 6v7M9 7 Q11 5 13 7" strokeWidth="1.8" />
  </Ico>
);

const CharIcon = ({ children }) => <OptIcon $w={20}>{children}</OptIcon>;

export default function App() {
  return (
    <Page>
      <GlobalStyle />

      <MenuBar>
        <Logo>Id</Logo>
        <MenuList>
          {["Fichier", "Edition", "Page", "Texte", "Objet", "Tableau", "Affichage", "Fenêtre", "Aide"].map((m) => (
            <span key={m}>{m}</span>
          ))}
        </MenuList>
        <BarSep $ml={13} />
        <Badge $ml={15}>Br</Badge>
        <Badge $ml={19}>St</Badge>
        <Zoom>150 %</Zoom>
        <Chevron />
        <BarSep $ml={11} />
        <BarIcon $ml={10}>
          <Ico>
            <rect x="4" y="5" width="9" height="9" fill="currentColor" stroke="none" />
            <path d="M1 2h14M1 2v12" strokeDasharray="1.5 1.5" />
          </Ico>
          <Chevron />
        </BarIcon>
        <BarIcon $ml={16}>
          <Ico>
            <rect x="4" y="4" width="8" height="8" fill="currentColor" stroke="none" />
            <path d="M1 5V1h4M11 1h4v4M15 11v4h-4M5 15H1v-4" />
          </Ico>
          <Chevron />
        </BarIcon>
        <BarIcon $ml={15}>
          <Ico>
            <rect x="1" y="2" width="6" height="12" fill="currentColor" stroke="none" />
            <rect x="9" y="2" width="6" height="5" fill="currentColor" stroke="none" />
            <rect x="9" y="9" width="6" height="5" fill="currentColor" stroke="none" />
          </Ico>
          <Chevron />
        </BarIcon>
        <Publish>
          <Share size={13} strokeWidth={1.5} />
          Publish Online
        </Publish>
        <BarSep $ml={8} />
        <Workspace>
          Les indispensables
          <Chevron c="#222" />
        </Workspace>
        <BarSep />
        <StockField>
          <SearchGlass c="#555" />
          Adobe Stock
        </StockField>
        <WinButtons>
          <WinBtn $f={.85} $first>
            <Ico s={8} vb="0 0 8 8"><path d="M0 6h8" strokeWidth="2" /></Ico>
          </WinBtn>
          <WinBtn>
            <Ico s={11} vb="0 0 11 11">
              <path d="M3.5 3V1h6.5v6H8M1 3.5h7v6.5H1z" strokeWidth="1.2" />
            </Ico>
          </WinBtn>
          <WinBtn $f={1.5}>X</WinBtn>
        </WinButtons>
      </MenuBar>

      <OptionsBar>
        <Grip />
        <Pair $w={160}>
          <FieldSelect w={160} search value="Helvetica Neue LT Std" />
          <FieldSelect w={160} value="55 Roman" />
        </Pair>
        <Pair $w={108} $ml={5}>
          <Line $gap={1}>
            <OptIcon $w={20}><SizeIcon /></OptIcon>
            <Spin w={87} value="12 pt" drop />
          </Line>
          <Line $gap={1}>
            <OptIcon $w={20}><LeadIcon /></OptIcon>
            <Spin w={87} value="(14,4 pt)" drop />
          </Line>
        </Pair>
        <FourBtns $ml={10}>
          <AlignBtn $on><TextLines kind="left" /></AlignBtn>
          <AlignBtn><TextLines kind="center" /></AlignBtn>
          <AlignBtn><TextLines kind="right" /></AlignBtn>
          <AlignBtn><TextLines kind="toward" /></AlignBtn>
          <AlignBtn><TextLines kind="left" /></AlignBtn>
          <AlignBtn><TextLines kind="justify" /></AlignBtn>
          <AlignBtn><TextLines kind="justify" /></AlignBtn>
          <AlignBtn><TextLines kind="toward" /></AlignBtn>
        </FourBtns>
        <BarSep $h={46} $ml={5} />
        <FourBtns $ml={2}>
          <AlignBtn $on><VAlign kind="top" /></AlignBtn>
          <AlignBtn><VAlign kind="middle" /></AlignBtn>
          <AlignBtn><VAlign kind="bottom" /></AlignBtn>
          <AlignBtn><VAlign kind="just" /></AlignBtn>
          <AlignBtn><PanelText t="T" size={17} w={400} /></AlignBtn>
          <AlignBtn>
            <Ico><path d="M2 8h11M13 3v10M2 5v6" /></Ico>
          </AlignBtn>
          <AlignBtn>
            <Ico><path d="M8 2v11M3 13h10M5 2h6" /></Ico>
          </AlignBtn>
          <AlignBtn>
            <Ico><path d="M3 8h11M3 3v10M14 5v6" /></Ico>
          </AlignBtn>
        </FourBtns>
        <BarSep $h={46} $ml={3} />
        <Pair $w={105} $ml={8}>
          <Line $gap={5}>
            <Ico s={13} vb="0 0 13 16"><path d="M.5 2h12v12H.5zM.5 6h12M.5 10h12" /></Ico>
            <Spin w={87} value="6" />
          </Line>
          <Line $gap={5}>
            <Ico s={13} vb="0 0 13 16"><path d="M.5 2h12v12H.5zM4.5 2v12M8.5 2v12" /></Ico>
            <Spin w={87} value="4" />
          </Line>
        </Pair>
        <BarSep $h={46} $ml={8} />
        <Pair $w={16} $ml={7}>
          <Line>
            <Ico>
              <path d="M1 1.5h14v13H1zM8 1.5v4M8 10.5v4M6 8h4M8 6v4" />
            </Ico>
          </Line>
          <Line>
            <Ico c="#777">
              <path d="M1 1.5h14v13H1zM1 8h14" />
            </Ico>
          </Line>
        </Pair>
        <BarSep $h={46} $ml={7} />
        <Pair $w={39} $ml={7}>
          <Line $gap={4}>
            <Swatch>
              <RedSlash />
            </Swatch>
            <SmallBtn><Chevron dir="right" s={8} /></SmallBtn>
          </Line>
          <Line $gap={4}>
            <Swatch $black><SwatchCore /></Swatch>
            <SmallBtn><Chevron dir="right" s={8} /></SmallBtn>
          </Line>
        </Pair>
        <BarSep $h={46} $ml={7} />
        <Pair $w={85} $ml={5}>
          <Spin w={85} value="1 pt" drop />
          <SpinBox $w={85}>
            <SpinValue $white>
              <StrokeBar />
            </SpinValue>
            <DropPart><Chevron /></DropPart>
          </SpinBox>
        </Pair>
        <Preview>
          <Ico s={62} h={38} vb="0 0 62 38" c="#4c90bd">
            <path d="M2 2h58v34H2zM31 2v34M2 19h58" strokeWidth="1.6" />
            <path d="M6 6h21M6 9h21M6 12h21M6 15h21M35 6h21M35 9h21M35 12h21M35 15h21M6 23h21M6 26h21M6 29h21M6 32h21M35 23h21M35 26h21M35 29h21M35 32h21" stroke="#888" strokeWidth=".8" />
          </Ico>
        </Preview>
        <BarSep $h={46} $ml={8} />
        <Pair $w={212} $ml={7}>
          <Line $gap={14}>
            <Ico><path d="M2 2h12v12H2zM2 5h12M5 5v9M11 5v9" /></Ico>
            <FieldSelect w={182} white pad={7} value="[Sans]" />
          </Line>
          <Line $gap={14}>
            <Ico><path d="M2 2h12v12H2zM2 5h12M2 8h12M2 11h12" /></Ico>
            <FieldSelect w={182} white pad={7} value="[Tableau simple]" />
          </Line>
        </Pair>
        <BarSep $h={46} $ml={10} />
        <Pair $w={198} $ml={3}>
          <Line $gap={7}>
            <Ico s={13} vb="0 0 13 16"><path d="M.5 1.5h12v13H.5zM6.5 4v8M4.5 4h4M4.5 12h4" /></Ico>
            <FieldSelect w={86} value="Supérieure..." inlineChevron />
            <Spin w={86} value="1,058 mm" />
          </Line>
          <Line $gap={7}>
            <Ico s={13} vb="0 0 13 16"><path d="M.5 1.5h12v13H.5zM3 8h7M3 5v6M10 5v6" /></Ico>
            <Spin w={86} value="46,15 mm" />
          </Line>
        </Pair>
        <BarSep $h={46} $ml={6} />
        <Pair $w={104} $ml={7}>
          <Line $gap={5}>
            <Ico s={13} vb="0 0 13 16"><path d="M1 1.5h11v13H1zM3 4h7M6.5 5v4M3 11h7M3 13h7" /></Ico>
            <Spin w={86} value="1,411 mm" />
          </Line>
          <Line $gap={5}>
            <Ico s={13} vb="0 0 13 16"><path d="M1 1.5h11v13H1zM3 3h7M3 5h7M6.5 7v4M3 12h7" /></Ico>
            <Spin w={86} value="1,411 mm" />
          </Line>
        </Pair>
        <BarIcon $ml={10}>
          <Ico s={18} vb="0 0 18 18">
            <ellipse cx="7" cy="6" rx="2" ry="4.4" transform="rotate(-25 7 6)" strokeWidth="1.3" />
            <ellipse cx="11" cy="13" rx="2" ry="4.4" transform="rotate(-25 11 13)" strokeWidth="1.3" />
          </Ico>
        </BarIcon>
        <Pair $w={103} $ml={10}>
          <Line $gap={4}>
            <Ico s={13} vb="0 0 13 16"><path d="M1 1.5h11v13H1zM7 4h4M7 7h4M7 10h4M2.5 8h3" /></Ico>
            <Spin w={87} value="1,411 mm" />
          </Line>
          <Line $gap={4}>
            <Ico s={13} vb="0 0 13 16"><path d="M1 1.5h11v13H1zM2.5 4h4M2.5 7h4M2.5 10h4M8 8h3" /></Ico>
            <Spin w={87} value="1,411 mm" />
          </Line>
        </Pair>
        <BarEnd>
          <Ico s={16} c="#333">
            <path d="M10 1 L4 9h4l-2 6 L12 7H8z" strokeWidth="1.1" />
          </Ico>
          <BarSep $h={46} $ml={12} />
          <SideIcons>
            <FaCog size={12} color="#444" />
            <Burger />
          </SideIcons>
        </BarEnd>
      </OptionsBar>

      <Main>
        <ToolDock>
          <CollapseStrip>››</CollapseStrip>
          <ToolGrip />
          {["select", "direct", "page", "gap", "collector"].map((k) => (
            <ToolBtn key={k} $more={k === "collector"}>{toolIcons[k]}</ToolBtn>
          ))}
          <ToolBtn $on $more>{TypeGlyph}</ToolBtn>
          <ToolBtn>{toolIcons.line}</ToolBtn>
          <ToolBtn $more>
            <FaPenNib size={15} color={DARK} style={{ transform: "scaleX(-1)" }} />
          </ToolBtn>
          <ToolBtn $more><FaPencilAlt size={15} color={DARK} /></ToolBtn>
          <ToolBtn $more>{toolIcons.frame}</ToolBtn>
          <ToolBtn $more>{toolIcons.rect}</ToolBtn>
          <ToolDivider />
          <ToolBtn><Scissors size={18} color={DARK} strokeWidth={1.6} /></ToolBtn>
          <ToolBtn $more>{toolIcons.free}</ToolBtn>
          <ToolBtn>{toolIcons.gradient}</ToolBtn>
          <ToolBtn>{toolIcons.feather}</ToolBtn>
          <ToolDivider $tight />
          <ToolBtn>{toolIcons.note}</ToolBtn>
          <ToolBtn $more><Pipette size={17} color={DARK} strokeWidth={1.6} style={{ transform: "scaleX(-1) rotate(-90deg)" }} /></ToolBtn>
          <ToolBtn><FaHandPaper size={16} color={DARK} /></ToolBtn>
          <ToolBtn><Search size={17} color={DARK} strokeWidth={1.6} /></ToolBtn>
          <ToolDivider $tight />
          <ColourBlock>
            <SwapRow>
              <Ico s={12} vb="0 0 12 12">
                <rect x="3" y="3" width="8" height="8" fill="currentColor" stroke="none" />
                <rect x=".5" y=".5" width="7" height="7" fill="#fff" stroke="#a81e1e" />
              </Ico>
              <Ico s={12} vb="0 0 12 12">
                <path d="M2 3h6a2 2 0 0 1 2 2v5M8 8l2 2.5L12 8M4 1 L2 3 L4 5" strokeWidth="1" />
              </Ico>
            </SwapRow>
            <FillBox><RedSlash /></FillBox>
            <StrokeBox><StrokeHole /></StrokeBox>
          </ColourBlock>
          <FormatRow>
            <Ico s={13} vb="0 0 13 13"><rect x="1.5" y="1.5" width="10" height="10" /></Ico>
            <PanelText t="T" size={13} />
          </FormatRow>
          <DockBtn $mt={6}><BlackSwatch /></DockBtn>
          <DockBtn $mt={6}>
            <Ico s={14} vb="0 0 14 14">
              <path d="M1.5 2h9v7h-9zM4.5 5h8v7h-8z" />
              <rect x="4.5" y="5" width="6" height="4" fill="currentColor" opacity=".5" stroke="none" />
            </Ico>
          </DockBtn>
        </ToolDock>

        <LeftColumn>
          <CollapseStrip>‹‹</CollapseStrip>
          <TabRow>
            <PanelTab $on $w={76}><Updown />Dégradé</PanelTab>
            <MenuEnd><Burger /></MenuEnd>
          </TabRow>
          <DegBody>
            <DegRow $h={19} $mb={6}>
              <DegLabel><GradThumb />Type :</DegLabel>
              <SelectLight><Chevron /></SelectLight>
            </DegRow>
            <DegRow $h={21} $mb={5}>
              <DegLabel>Angle :</DegLabel>
              <GhostField />
            </DegRow>
            <DegRow $h={21} $mb={6}>
              <DegLabel>Emplacement :</DegLabel>
              <InlineRow><GhostField />%</InlineRow>
            </DegRow>
            <DegRow $h={24}>
              <DegLabel>Inverser</DegLabel>
              <Ico s={17} vb="0 0 17 17">
                <rect x=".5" y="1" width="7" height="6" fill="#777" />
                <rect x="8.5" y="9" width="7" height="6" fill="#999" />
                <path d="M12 1v5M10 4l2 2 2-2M4 15v-5M2 12l2-2 2 2" strokeWidth="1" />
              </Ico>
            </DegRow>
            <GradBar />
          </DegBody>
          <PanelSep />
          <TabRow>
            <PanelTab $on $w={80} $center>Pathfinder</PanelTab>
          </TabRow>
          <ToolBlock $pt={8}>
            <Caption>Tracés :</Caption>
            <IconGrid>
              {["a", "b", "c", "d"].map((k) => <span key={k}>{pfIcons[k]}</span>)}
            </IconGrid>
          </ToolBlock>
          <ToolBlock>
            <Caption>Pathfinder :</Caption>
            <IconGrid>
              {["union", "minus", "inter", "excl", "back"].map((k) => <span key={k}>{pfIcons[k]}</span>)}
            </IconGrid>
          </ToolBlock>
          <ToolBlock>
            <Caption>Convertir la forme :</Caption>
            <IconGrid>
              {["srect", "sround", "sbevel", "soct", "sell", "stri", "shex", "sline", "splus"].map((k) => <span key={k}>{pfIcons[k]}</span>)}
            </IconGrid>
          </ToolBlock>
          <ToolBlock $last $pb={7}>
            <Caption>Convertir le point :</Caption>
            <IconGrid>
              {["p1", "p2", "p3", "p4"].map((k) => <span key={k}>{pfIcons[k]}</span>)}
            </IconGrid>
          </ToolBlock>
          <PanelSep />
          <TabRow>
            <PanelTab $on $w={92}><Updown />Alignement</PanelTab>
            <MenuEnd><Burger /></MenuEnd>
          </TabRow>
          <ToolBlock>
            <Caption>Alignement des objets :</Caption>
            <IconGrid $split>
              {["l", "c", "r"].map((k) => <span key={k}>{alignIcons[k]}</span>)}
              <SplitGap />
              {["t", "m", "b"].map((k) => <span key={k}>{alignIcons[k]}</span>)}
            </IconGrid>
          </ToolBlock>
          <ToolBlock>
            <Caption>Répartition des objets :</Caption>
            <IconGrid $split>
              {["dt", "dm", "db"].map((k) => <span key={k}>{alignIcons[k]}</span>)}
              <SplitGap />
              {["dl", "dh", "dr"].map((k) => <span key={k}>{alignIcons[k]}</span>)}
            </IconGrid>
            <CheckRow>
              <CheckBox />
              <CheckLabel>Utiliser l'espacement</CheckLabel>
              <GhostSpin><Updown />0 mm</GhostSpin>
            </CheckRow>
            <AlignOn>
              Aligner sur :
              <Ico s={16}>
                <path d="M3 1.5h6l3 3v9H3zM5 6h5M5 8.5h5M5 11h5" />
                <path d="M12 13h4l-2 2z" fill="currentColor" stroke="none" />
              </Ico>
            </AlignOn>
          </ToolBlock>
          <ToolBlock $last>
            <Caption>Répartition de l'espacement :</Caption>
            <IconGrid>
              {["sv", "sh"].map((k) => <span key={k}>{alignIcons[k]}</span>)}
            </IconGrid>
            <CheckRow>
              <CheckBox />
              <CheckLabel>Utiliser l'espacement</CheckLabel>
              <GhostSpin><Updown />0 mm</GhostSpin>
            </CheckRow>
          </ToolBlock>
          <PanelSep />
          <TabRow>
            <PanelTab $w={34} $pl={4}>Con</PanelTab>
            <PanelTab $w={34} $pl={4}>Tâch</PanelTab>
            <PanelTab $w={34} $pl={4}>Bou</PanelTab>
            <PanelTab $w={34} $pl={4}>Hyp</PanelTab>
            <PanelTab $on $w={64} $pl={6}><Updown />Scripts</PanelTab>
            <MenuEnd><Burger /></MenuEnd>
          </TabRow>
          <ScriptList>
            <ScriptRows>
              <ScriptRow $pl={9} $folder>
                <Chevron />
                <Ico s={15}><path d="M0 3h6l1 1.5h9V14H0z" fill="currentColor" stroke="none" /></Ico>
                Utilisateur
              </ScriptRow>
              <ScriptRow $pl={46} $sel><ScriptGlyph />BookBarcodeTry.jsx</ScriptRow>
              <ScriptRow $pl={46}><ScriptGlyph />ClaquosBeta.jsx</ScriptRow>
            </ScriptRows>
            <ListScroll>
              <Chevron dir="up" />
              <ListThumb />
              <Chevron />
            </ListScroll>
          </ScriptList>
          <BlankFoot />
        </LeftColumn>

        <DocColumn>
          <DocTabs>
            <DocTab>
              *Sans titre-1 @ 150%
              <TabClose>×</TabClose>
            </DocTab>
          </DocTabs>
          <RulerTop>
            <RulerCorner>
              <Ico s={11} vb="0 0 11 11" c="#222">
                <path d="M4 0v11M0 3h11" strokeDasharray="1 1" />
              </Ico>
            </RulerCorner>
            <HTicks>
              {hLabels.map((n, i) => <HCell key={i}>{n}</HCell>)}
            </HTicks>
            <ScrollEnd><Chevron dir="up" s={8} /></ScrollEnd>
          </RulerTop>
          <CanvasRow>
            <RulerLeft>
              {vLabels.map((n, i) => (
                <VCell key={i}>
                  {n.split("").map((d, j) => <div key={j}>{d}</div>)}
                </VCell>
              ))}
            </RulerLeft>
            <Canvas>
              <DocPage />
              <MarginGuides>
                <BlueRule />
              </MarginGuides>
              <BlackTable>
                {[0, 1, 2, 3, 4, 5].map((r) => <TableRow key={r} $last={r === 5} />)}
              </BlackTable>
            </Canvas>
            <VScroll><VThumb /></VScroll>
          </CanvasRow>
          <StatusBar>
            <StatusLeft>
              <NavGlyph $w={33}>{"|◂    ◂"}</NavGlyph>
              <PageField>1<Chevron /></PageField>
              <NavGlyph $w={38}>{"▸    ▸|"}</NavGlyph>
              <Ico s={16}><path d="M4 14V6a4 4 0 0 1 8 0v8M7 8v6" strokeWidth="2" /></Ico>
              <StatusText $gap={8} $ml={8}>[Standard] (de tra...<Chevron /></StatusText>
              <Green />
              <StatusText $ml={-8} $gap={5}>Aucune erreur<Chevron /></StatusText>
            </StatusLeft>
            <HTrack>
              <Chevron dir="left" />
              <HThumb />
              <Chevron dir="right" />
            </HTrack>
            <StatusEnd>
              <Ico s={14} vb="0 0 14 14"><path d="M1.5 1.5h11v11h-11zM7 1.5v11" /></Ico>
            </StatusEnd>
          </StatusBar>
        </DocColumn>

        <RightColumn>
          <CollapseStrip $j="flex-end">››</CollapseStrip>
          <TabRow>
            <PanelTab $w={57} $center>Pages</PanelTab>
            <PanelTab $w={66} $center>Calques</PanelTab>
            <PanelTab $w={51} $on $center>Liens</PanelTab>
            <MenuEnd><Burger /></MenuEnd>
          </TabRow>
          <NameHead>
            <span>Nom</span>
            <HeadCell $w={25} $ml={107}>
              <Ico s={13} vb="0 0 13 13" c="#444">
                <path d="M6.5 1 L12.5 12H.5zM6.5 5v4M6.5 10v1" />
              </Ico>
            </HeadCell>
            <HeadCell $w={33} $r>
              <Ico s={12} vb="0 0 12 12" c="#444"><path d="M2 1h5l3 3v7H2z" /></Ico>
              <Ico s={6} vb="0 0 6 6" c="#333"><path d="M0 4h6L3 1z" fill="currentColor" stroke="none" /></Ico>
            </HeadCell>
          </NameHead>
          <LinkList />
          <LinkFoot>
            <Chevron />
            <FootCount>0 lien(s)</FootCount>
            <FootIcons>
              <Ico c="#777"><path d="M4 13h9a3 3 0 0 0 0-6 4 4 0 0 0-7-1 3 3 0 0 0-2 7z" fill="currentColor" /></Ico>
              <Ico c="#777"><path d="M6 5H4a3 3 0 0 0 0 6h3M10 5h2a3 3 0 0 1 0 6H9M4 8h8" strokeWidth="1.4" /></Ico>
              <Ico c="#777"><path d="M1 9h8M6 6l3 3-3 3M6 5V2h6l3 3v9H6" /></Ico>
              <Ico c="#777"><path d="M13 6a6 6 0 0 0-11 0M3 10a6 6 0 0 0 11 0M13 2v4H9M3 14v-4h4" strokeWidth="1.3" /></Ico>
              <Ico c="#777"><path d="M2 14l1-3L11 3l2 2-8 8z" fill="currentColor" /></Ico>
            </FootIcons>
          </LinkFoot>
          <PanelSep $h={3} />
          <InfoHead>
            Informations sur les liens
            <InfoArrows><span>◀</span><span>▶</span></InfoArrows>
          </InfoHead>
          <Grow />
          <PanelSep />
          <TabRow>
            <PanelTab $on $w={81}><Updown />Caractère</PanelTab>
            <PanelTab $w={48} $center>Paragr</PanelTab>
            <PanelTab $w={48} $center>Habilla</PanelTab>
            <PanelTab $w={49} $center>Tableau</PanelTab>
            <MenuEnd><Burger /></MenuEnd>
          </TabRow>
          <CharBody>
            <CharStack $gap={7}>
              <FieldSelect w={229} search value="Helvetica Neue LT Std" />
              <FieldSelect w={229} value="55 Roman" />
            </CharStack>
            <CharDivider />
            <CharStack>
              <CharRow>
                <CharCell $w={108}>
                  <CharIcon><SizeIcon /></CharIcon>
                  <Spin w={84} value="12 pt" drop />
                </CharCell>
                <CharCell $w={107}>
                  <CharIcon><LeadIcon /></CharIcon>
                  <Spin w={84} value="(14,4 pt)" drop />
                </CharCell>
              </CharRow>
              <CharRow>
                <CharCell $w={108}>
                  <CharIcon><KernIcon /></CharIcon>
                  <Spin w={84} value="Métrique" drop />
                </CharCell>
                <CharCell $w={107}>
                  <CharIcon><TrackIcon /></CharIcon>
                  <Spin w={84} value="0" drop />
                </CharCell>
              </CharRow>
            </CharStack>
            <CharDivider />
            <CharStack>
              <CharRow>
                <CharCell $w={108}>
                  <CharIcon><VScaleIcon /></CharIcon>
                  <Spin w={84} value="100 %" drop />
                </CharCell>
                <CharCell $w={107}>
                  <CharIcon><HScaleIcon /></CharIcon>
                  <Spin w={84} value="100 %" drop />
                </CharCell>
              </CharRow>
              <CharRow>
                <CharCell $w={108}>
                  <CharIcon><BaselineIcon /></CharIcon>
                  <Spin w={84} value="0 pt" />
                </CharCell>
                <CharCell $w={107}>
                  <CharIcon><GlyphItalic>T</GlyphItalic></CharIcon>
                  <Spin w={84} value="0°" />
                </CharCell>
              </CharRow>
            </CharStack>
            <CharDivider />
            <LangRow>
              <LangLabel>Langue :</LangLabel>
              <FieldSelect w={151} value="Français" inlineChevron />
            </LangRow>
          </CharBody>
          <PanelSep />
          <TabRow $h={29}>
            <PanelTab $on $w={142}><Updown />Styles de paragraphe</PanelTab>
            <PanelTab $w={84} $pl={11}>Styles de carac</PanelTab>
            <MenuEnd><Burger /></MenuEnd>
          </TabRow>
        </RightColumn>
      </Main>

      <Dialog>
        <DialogTitle>Options de tableau</DialogTitle>
        <DialogBody>
          <TabFrame>
            <DlgTabs>
              <DlgTab $w={124} $on>Format de tableau</DlgTab>
              <DlgTab $w={122}>Contours de ligne</DlgTab>
              <DlgTab $w={138}>Contours de colonne</DlgTab>
              <DlgTab $w={56}>Fonds</DlgTab>
              <DlgTab $w={181}>En-têtes et pieds de tableau</DlgTab>
            </DlgTabs>

            <Group $h={80} $pt={14}>
              <Legend>Dimensions du tableau</Legend>
              <FieldRow>
                <Left>
                  <FieldLabel $w={113}>Lignes de corps :</FieldLabel>
                  <Spin w={73} value="6" fs={12} />
                </Left>
                <Right>
                  <FieldLabel $w={112}>Colonnes :</FieldLabel>
                  <Spin w={73} value="4" fs={12} />
                </Right>
              </FieldRow>
              <FieldRow>
                <Left>
                  <FieldLabel $w={113}>Lignes d'en-tête :</FieldLabel>
                  <Spin w={73} value="0" fs={12} />
                </Left>
                <Right>
                  <FieldLabel $w={112}>Lignes de pied de tableau :</FieldLabel>
                  <Spin w={73} value="0" fs={12} />
                </Right>
              </FieldRow>
            </Group>

            <Group $h={136}>
              <Legend>Bordure du tableau</Legend>
              <FieldRow>
                <Left>
                  <FieldLabel $w={118} $mr={8}>Epaisseur :</FieldLabel>
                  <Spin w={102} value="1 pt" fs={12} drop />
                </Left>
                <Right>
                  <FieldLabel $w={112}>Type :</FieldLabel>
                  <SpinBox $w={174}>
                    <SpinValue $white><TypeStroke /></SpinValue>
                    <DropPart><Chevron /></DropPart>
                  </SpinBox>
                </Right>
              </FieldRow>
              <FieldRow>
                <Left>
                  <FieldLabel $w={118} $mr={8}>Couleur :</FieldLabel>
                  <ColourField>
                    <WhiteCell><Ink />[Noir]</WhiteCell>
                    <DropPart><Chevron /></DropPart>
                  </ColourField>
                </Left>
                <Right>
                  <FieldLabel $w={112}>Teinte :</FieldLabel>
                  <Spin w={73} value="100 %" fs={12} />
                  <CheckRight>
                    <CheckBox />
                    <CheckText>Surimpression</CheckText>
                  </CheckRight>
                </Right>
              </FieldRow>
              <FieldRow>
                <Left>
                  <FieldLabel $w={118} $mr={8}>Couleur d'espace :</FieldLabel>
                  <ColourField $off>
                    <WhiteCell><Ink $paper />[Papier]</WhiteCell>
                    <DropPart><Chevron c="#888" /></DropPart>
                  </ColourField>
                </Left>
                <Right>
                  <FieldLabel $w={112}>Teinte d'espace :</FieldLabel>
                  <Spin w={73} value="100 %" fs={12} off />
                  <CheckRight $off>
                    <CheckBox $off />
                    <CheckText>Surimpression</CheckText>
                  </CheckRight>
                </Right>
              </FieldRow>
              <FieldRow $mt={4} $pl={6}>
                <CheckRight $off $ml={0}>
                  <CheckBox $off />
                  <CheckText>Conserver la mise en forme locale</CheckText>
                </CheckRight>
              </FieldRow>
            </Group>

            <Group $h={55}>
              <Legend>Espacement du tableau</Legend>
              <FieldRow>
                <Left $w={315}>
                  <FieldLabel $w={113}>Espace avant :</FieldLabel>
                  <Spin w={105} value="1,411 mm" fs={12} />
                </Left>
                <Right>
                  <FieldLabel $w={112} $mr={6}>Espace après :</FieldLabel>
                  <Spin w={105} value="-1,411 mm" fs={12} />
                </Right>
              </FieldRow>
            </Group>

            <Group $h={50}>
              <Legend>Ordre de dessin des contours</Legend>
              <FieldRow>
                <FieldLabel $w={113}>Tracer :</FieldLabel>
                <FieldSelect w={255} value="Meilleurs sommets" fs={12} inlineChevron />
              </FieldRow>
            </Group>
          </TabFrame>
          <FooterRow>
            <Preview2>
              <CheckBox />
              <CheckText>Aperçu</CheckText>
            </Preview2>
            <PillBtn $primary>OK</PillBtn>
            <PillBtn>Annuler</PillBtn>
          </FooterRow>
        </DialogBody>
      </Dialog>
    </Page>
  );
}
